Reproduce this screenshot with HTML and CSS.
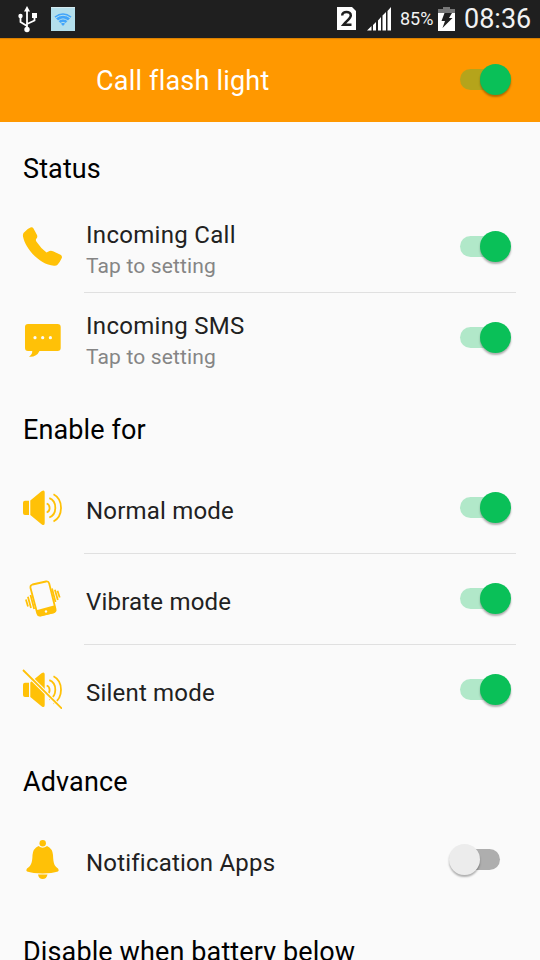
FILE: index.html
```html
<!DOCTYPE html>
<html lang="en">
<head>
<meta charset="utf-8">
<title>Call flash light</title>
<link rel="stylesheet" href="styles.css">
</head>
<body>
<div class="statusbar">
  <svg class="usb" width="22" height="28" viewBox="0 0 22 28" fill="#fff" stroke="#fff">
    <path d="M10 25V5M10 21L3.500 17V11M10 19L17.500 15.500V10" fill="none" stroke-width="1.800"/>
    <path d="M10 1L13 6.500H7z" stroke="none"/><circle cx="10" cy="24.500" r="2.700" stroke="none"/><circle cx="3.500" cy="11" r="2.200" stroke="none"/><path d="M15 8h5v5h-5z" stroke="none"/>
  </svg>
  <svg class="wifi" width="24" height="24" viewBox="0 0 24 24">
    <path d="M0 0h24v24H0z" fill="#b4dfec"/><path d="M0 .5h24" stroke="#d5eaf0"/>
    <path d="M3.500 9.500Q12 3 20.500 9.500L12 19z" fill="#43a5fa"/>
    <path d="M4.500 11Q12 5.500 19.500 11M7 14Q12 9.800 17 14M9 16.500Q12 14 15 16.500" fill="none" stroke="#b4dfec" stroke-width="1"/>
  </svg>
  <svg class="sim" width="19" height="24" viewBox="0 0 19 24"><path d="M0 0h15l4 4v19H0z" fill="#fff"/><path d="M5.200 8.500C5.200 3.700 13.800 3.700 13.800 8.500C13.800 11.500 10 13.500 6.500 17.700H14.500" fill="none" stroke="#1f1f1f" stroke-width="2.500"/></svg>
  <svg class="signal" width="25" height="24" viewBox="0 0 25 24" fill="#fff"><path d="M0 23.500L4.500 19V23.500zM6 18L9 15V23.500H6zM11 13.500L14 10V23.500H11zM15.500 8.500L19 5V23.500H15.500zM20.500 4L24 0V23.500H20.500z"/></svg>
  <span class="percent">85%</span>
  <svg class="battery" width="17" height="25" viewBox="0 0 17 25"><path d="M5 0h7v2h5v5H0V2h5z" fill="#777"/><path d="M0 6h17v18H0z" fill="#fff"/><path d="M6.500 6H14L11 11H14.500L4.500 21L7 14H3.500z" fill="#1f1f1f"/></svg>
  <span class="clock">08:36</span>
</div>
<header class="appbar"><h1>Call flash light</h1><span class="switch on"></span></header>
<main>
  <h2>Status</h2>
  <div class="row line">
    <svg class="icon" viewBox="0 0 40 40"><path d="M1.500 7Q5 2.500 9 1.200Q10.700 1 11.500 2.500L15 9Q15.800 11 14.500 12.500Q13.200 14 14.500 15.800Q18.500 22 24.500 26.500Q26 25.500 27.500 25Q29 24.300 31 25.200L38.500 28.800Q40.500 30 39.800 32Q38 36 35.500 38.800Q34.500 40 32 39.800C17 38.500 3 22 1 10.500Q.7 8.500 1.500 7z"/></svg>
    <div class="text"><span class="label">Incoming Call</span><span class="hint">Tap to setting</span></div><span class="switch on"></span>
  </div>
  <div class="row">
    <svg class="icon" viewBox="0 0 40 40"><path d="M6 7H35.500Q38.700 7 38.700 10V31Q38.700 34 35.500 34H17.500Q14.500 40.300 7 39.700Q10.500 37.500 10.200 34H6Q3 34 3 31V10Q3 7 6 7z"/><g class="paper"><circle cx="13" cy="20.700" r="1.600"/><circle cx="20.700" cy="20.700" r="1.600"/><circle cx="28.400" cy="20.700" r="1.600"/></g></svg>
    <div class="text"><span class="label">Incoming SMS</span><span class="hint">Tap to setting</span></div><span class="switch on"></span>
  </div>
  <h2>Enable for</h2>
  <div class="row line">
    <svg class="icon" viewBox="0 0 40 40"><path d="M3 13.700H7V28H3Q1 28 1 26V15.700Q1 13.700 3 13.700zM8.300 13.500L19.500 4.200Q22.700 2.500 22.700 5.500V36Q22.700 39.500 19.500 37.200L8.300 28z"/><path class="stroke" d="M24.700 16.500Q27.600 17.500 27.600 21T24.700 25.500M27.300 11.200C35.300 14 35.300 27.500 27.300 30.500M31.500 7.200C41.500 12.500 41.500 29 31.500 34.500"/></svg>
    <span class="label mode">Normal mode</span><span class="switch on"></span>
  </div>
  <div class="row line">
    <svg class="icon" viewBox="0 0 40 40"><path class="stroke" d="M10.500 6.500L24 3.500Q26.500 3 27.200 5.500L33.500 31Q34 33.500 31.500 34.300L18.500 37.500Q16 38 15.300 35.500L8.500 10Q8 7.200 10.500 6.500z"/><path d="M14.300 32.300L32.800 27.300L34.300 33L32.500 35L18 38.200L15.500 37z"/><circle class="paper" cx="24" cy="33.500" r="1.200"/><path class="stroke" d="M3.900 21.500L6 28.500M5.900 18.700L9 30M8.500 17L12.200 31M30 10.500L33.500 24M32.900 11.700L35.800 22M35.500 12.700L37.700 19.500"/></svg>
    <span class="label mode">Vibrate mode</span><span class="switch on"></span>
  </div>
  <div class="row">
    <svg class="icon" viewBox="0 0 40 40"><path d="M3 13.700H7V28H3Q1 28 1 26V15.700Q1 13.700 3 13.700zM8.300 13.500L19.500 4.200Q22.700 2.500 22.700 5.500V36Q22.700 39.500 19.500 37.200L8.300 28z"/><path class="stroke" d="M24.700 16.500Q27.600 17.500 27.600 21T24.700 25.500M27.300 11.200C35.300 14 35.300 27.500 27.300 30.500M31.500 7.200C41.500 12.500 41.500 29 31.500 34.500"/><path class="gap" d="M1 1L40 39.700"/><path class="stroke" d="M1 1L40 39.700"/></svg>
    <span class="label mode">Silent mode</span><span class="switch on"></span>
  </div>
  <h2>Advance</h2>
  <div class="row">
    <svg class="icon" viewBox="0 0 40 40"><circle cx="20.700" cy="4.300" r="3.200"/><path d="M16.500 7Q20.700 10.500 25 7Q30.500 9.500 31 16C31.300 25 32.500 27 36 29.500Q37.500 31.500 36 32.500C29 35 12 35 5 32.500Q3.500 31.500 5 29.500C9 27 10.300 24 10.500 16Q11 9.500 16.500 7zM16 35.500H25.500Q24.500 40 20.700 40T16 35.500z"/></svg>
    <span class="label mode">Notification Apps</span><span class="switch"></span>
  </div>
  <h2>Disable when battery below</h2>
</main>
</body>
</html>
```

FILE: styles.css
```css
* { box-sizing: border-box; }
body {
  margin: 0;
  height: 960px;
  overflow: hidden;
  background: #fafafa;
  color: #212121;
  font-family: Roboto, sans-serif;
}
svg { display: block; flex: none; }
.statusbar {
  display: flex;
  align-items: center;
  height: 38px;
  padding: 0 9px 0 17px;
  background: #1f1f1f;
  color: #f2f2f2;
}
.wifi { margin-left: 12px; }
.sim { margin-left: auto; }
.signal { margin-left: 11px; }
.percent { width: 33px; margin-left: 8px; font-size: 18px; line-height: 40px; }
.battery { margin-left: 5px; }
.clock { width: 67px; margin-left: 9px; font-size: 27px; line-height: 38px; white-space: nowrap; }
.appbar {
  display: flex;
  align-items: flex-start;
  height: 84px;
  padding: 0 29px 0 96px;
  background: #ff9800;
  box-shadow: inset 0 2px 1px -1px #d87e00;
}
h1 {
  margin: 0 auto 0 0;
  color: #fff;
  font-size: 27px;
  font-weight: 400;
  line-height: 86px;
  letter-spacing: .2px;
}
h2 {
  height: 80px;
  margin: 0;
  padding: 7px 0 0 23px;
  color: #000;
  font-size: 27px;
  font-weight: 400;
  line-height: 80px;
  letter-spacing: .12px;
}
.row {
  display: flex;
  height: 90px;
  padding: 0 29px 0 22px;
  align-items: flex-start;
}
.line {
  height: 91px;
  background: linear-gradient(#e0e0e0, #e0e0e0) 84px 100% / 432px 1px no-repeat;
}
.icon { width: 40px; height: 40px; margin-top: 24px; fill: #ffc107; }
.stroke { fill: none; stroke: #ffc107; stroke-width: 1.8; }
.gap { stroke: #fafafa; stroke-width: 4; }
.paper { fill: #fafafa; }
.text { display: flex; flex-direction: column; padding: 17px 0 0 24px; }
.label { font-size: 24px; line-height: 32px; letter-spacing: .2px; white-space: nowrap; }
.text .label { letter-spacing: .3px; }
.hint { color: #858585; font-size: 21px; line-height: 30px; letter-spacing: .15px; }
.mode { padding: 32px 0 0 24px; }
.switch {
  position: relative;
  flex: none;
  width: 51px;
  height: 21px;
  margin-left: auto;
}
.appbar .switch { margin-top: 31px; }
.row .switch { margin-top: 34px; }
.switch::before {
  content: "";
  display: block;
  width: 40px;
  height: 21px;
  border-radius: 11px;
  background: #aeaeae;
}
.switch::after {
  content: "";
  position: absolute;
  left: 0;
  top: -5px;
  width: 31px;
  height: 31px;
  border-radius: 50%;
  background: #ececec;
  box-shadow: 0 2px 2px rgba(0, 0, 0, .3);
}
.row .switch:not(.on) { margin-right: 11px; }
.switch:not(.on)::before { margin-left: 11px; }
.switch.on::before { background: rgba(10, 192, 88, .3); }
.switch.on::after { left: 20px; background: #0ac058; }
```
